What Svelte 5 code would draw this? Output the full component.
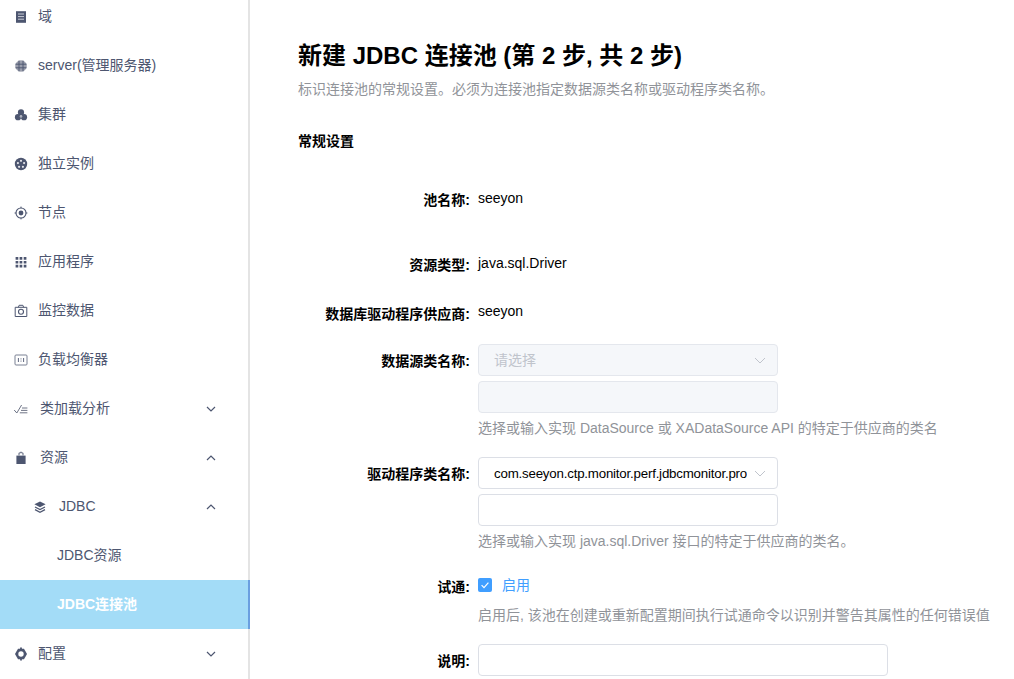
<script>
  const navItems = [
    { label: '域', icon: 'doc' },
    { label: 'server(管理服务器)', icon: 'globe' },
    { label: '集群', icon: 'cluster' },
    { label: '独立实例', icon: 'gear' },
    { label: '节点', icon: 'target' },
    { label: '应用程序', icon: 'grid' },
    { label: '监控数据', icon: 'camera' },
    { label: '负载均衡器', icon: 'balance' },
    { label: '类加载分析', icon: 'check', arrow: 'down', wide: true },
    { label: '资源', icon: 'bag', arrow: 'up', wide: true },
    { label: 'JDBC', icon: 'layers', arrow: 'up', level: 2 },
    { label: 'JDBC资源', level: 3 },
    { label: 'JDBC连接池', level: 3, active: true },
    { label: '配置', icon: 'cog', arrow: 'down' }
  ];
</script>

<div class="page">
  <aside class="sidebar">
    <ul class="menu">
      {#each navItems as item}
        <li class="item" class:active={item.active} class:sub={item.level === 2} class:leaf={item.level === 3} class:wide={item.wide}>
          {#if item.icon}
            <svg class="icon" viewBox="0 0 14 14" fill="#4d5670">
              {#if item.icon === 'doc'}
                <path d="M2 1.2h10v11.6H2z" /><path d="M4 4h6M4 6.6h6M4 9.2h6" stroke="#c9ccd6" stroke-width="1" />
              {:else if item.icon === 'globe'}
                <circle cx="7" cy="7" r="5.8" fill="#9a9eac" /><path d="M1.5 5.2h11M1.5 8.8h11M5 1.6v10.8M9 1.6v10.8" stroke="#4d5670" stroke-width=".9" />
              {:else if item.icon === 'cluster'}
                <circle cx="7" cy="4.4" r="3.1" /><circle cx="4" cy="9.2" r="3.1" /><circle cx="10" cy="9.2" r="3.1" /><circle cx="7" cy="8.4" r="1.3" fill="#aeb2bf" />
              {:else if item.icon === 'gear'}
                <circle cx="7" cy="7" r="6.2" /><circle cx="7" cy="3.8" r="1.1" fill="#e4e5ea" /><circle cx="10.1" cy="6.1" r="1.1" fill="#e4e5ea" /><circle cx="8.9" cy="9.8" r="1.1" fill="#e4e5ea" /><circle cx="5.1" cy="9.8" r="1.1" fill="#e4e5ea" /><circle cx="3.9" cy="6.1" r="1.1" fill="#e4e5ea" />
              {:else if item.icon === 'target'}
                <circle cx="7" cy="7" r="5" fill="none" stroke="#4d5670" stroke-width="1.1" /><circle cx="7" cy="7" r="2.4" /><path d="M7 .6v1.6M7 11.8v1.6M.6 7h1.6M11.8 7h1.6" stroke="#4d5670" stroke-width="1" />
              {:else if item.icon === 'grid'}
                <path d="M1.6 2h2.7v2.7H1.6zM5.6 2h2.7v2.7H5.6zM9.7 2h2.7v2.7H9.7zM1.6 5.9h2.7v2.7H1.6zM5.6 5.9h2.7v2.7H5.6zM9.7 5.9h2.7v2.7H9.7zM1.6 9.8h2.7v2.7H1.6zM5.6 9.8h2.7v2.7H5.6zM9.7 9.8h2.7v2.7H9.7z" />
              {:else if item.icon === 'camera'}
                <path d="M1.2 3.3h11.6v9.2H1.2zM4.4 3.3l.7-2h3.8l.7 2" fill="none" stroke="#4d5670" stroke-width="1" /><circle cx="7" cy="7.8" r="2.5" fill="none" stroke="#4d5670" stroke-width="1.1" />
              {:else if item.icon === 'balance'}
                <rect x="1" y="2" width="12" height="10" rx="1" fill="none" stroke="#7b8194" stroke-width="1" /><path d="M4.4 5v4M7 5.4v1M7 7.6v1M9.6 5v4" stroke="#4d5670" stroke-width=".9" />
              {:else if item.icon === 'check'}
                <path d="M.2 8l2.6 3L7.6 3M8 6h5.4M7 8.4h6.4M5.8 10.8h7.6" fill="none" stroke="#5d6478" stroke-width=".9" />
              {:else if item.icon === 'bag'}
                <path d="M2.4 4.6h9.2V13H2.4z" /><path d="M5 4.6V2.4L7 1.2l2 1.2v2.2" fill="none" stroke="#7b8194" stroke-width="1.2" />
              {:else if item.icon === 'layers'}
                <path d="M7 1.4l5.6 2.9L7 7.2 1.4 4.3z" /><path d="M2 7l5 2.6L12 7M2 9.6l5 2.6 5-2.6" fill="none" stroke="#4d5670" stroke-width="1.2" />
              {:else if item.icon === 'cog'}
                <path d="M4 1.8h6L13 7l-3 5.2H4L1 7z" /><path d="M7 .6v2M7 11.4v2" stroke="#4d5670" stroke-width="1.8" /><circle cx="7" cy="7" r="2.7" fill="#fff" />
              {/if}
            </svg>
          {/if}
          <span class="label">{item.label}</span>
          {#if item.arrow}
            <svg class="arrow" viewBox="0 0 10 6" class:up={item.arrow === 'up'}>
              <path d="M1 1l4 4 4-4" fill="none" stroke="#4d5670" stroke-width="1.2" />
            </svg>
          {/if}
        </li>
      {/each}
    </ul>
  </aside>

  <main class="content">
    <h1>新建 JDBC 连接池 (第 2 步, 共 2 步)</h1>
    <p class="intro">标识连接池的常规设置。必须为连接池指定数据源类名称或驱动程序类名称。</p>
    <h2>常规设置</h2>

    <div class="row row-name">
      <div class="key">池名称:</div>
      <div class="value">seeyon</div>
    </div>
    <div class="row row-type">
      <div class="key">资源类型:</div>
      <div class="value">java.sql.Driver</div>
    </div>
    <div class="row row-vendor">
      <div class="key">数据库驱动程序供应商:</div>
      <div class="value">seeyon</div>
    </div>

    <div class="row row-ds">
      <div class="key boxed">数据源类名称:</div>
      <div class="field">
        <div class="select disabled">
          <span class="select-text">请选择</span>
          <svg class="caret" viewBox="0 0 12 7"><path d="M1 1l5 5 5-5" fill="none" stroke="#c0c4cc" stroke-width="1" /></svg>
        </div>
        <div class="input disabled"></div>
        <div class="help">选择或输入实现 DataSource 或 XADataSource API 的特定于供应商的类名</div>
      </div>
    </div>

    <div class="row row-driver">
      <div class="key boxed">驱动程序类名称:</div>
      <div class="field">
        <div class="select">
          <span class="select-text mono-ish">com.seeyon.ctp.monitor.perf.jdbcmonitor.proxy.MonitorDriver</span>
          <svg class="caret" viewBox="0 0 12 7"><path d="M1 1l5 5 5-5" fill="none" stroke="#c0c4cc" stroke-width="1" /></svg>
        </div>
        <div class="input"></div>
        <div class="help">选择或输入实现 java.sql.Driver 接口的特定于供应商的类名。</div>
      </div>
    </div>

    <div class="row row-ping">
      <div class="key ping-key">试通:</div>
      <div class="field">
        <div class="check">
          <span class="box">
            <svg viewBox="0 0 14 14"><path d="M3.6 7.2l2.4 2.4 4.4-5" fill="none" stroke="#fff" stroke-width="1.2" /></svg>
          </span>
          <span class="check-label">启用</span>
        </div>
        <div class="help ping-help">启用后, 该池在创建或重新配置期间执行试通命令以识别并警告其属性的任何错误值</div>
      </div>
    </div>

    <div class="row row-desc">
      <div class="key boxed">说明:</div>
      <div class="input long"></div>
    </div>
  </main>
</div>

<style>
  :global(body) {
    margin: 0;
    overflow: hidden;
    background: #fff;
  }

  .page {
    display: flex;
    height: 679px;
    overflow: hidden;
    font-family: "Liberation Sans", "Noto Sans CJK SC", sans-serif;
    font-size: 14px;
  }

  .sidebar {
    width: 250px;
    flex: none;
    box-sizing: border-box;
    border-right: 2px solid #e4e4e4;
  }

  .menu {
    list-style: none;
    margin: -8px -2px 0 0;
    padding: 0;
  }

  .item {
    display: flex;
    align-items: center;
    height: 49px;
    box-sizing: border-box;
    padding-left: 14px;
    color: #4d5670;
  }

  .label {
    padding-bottom: 4px;
  }

  .item.sub {
    padding-left: 33px;
  }

  .item.sub .label {
    padding-bottom: 2px;
  }

  .item.leaf {
    padding-left: 57px;
  }

  .item.active {
    background: #a3dcf7;
    border-right: 2px solid #6a9fe0;
    color: #fff;
    font-weight: 700;
  }

  .icon {
    width: 14px;
    height: 14px;
    flex: none;
    margin-right: 10px;
  }

  .item.wide .icon {
    margin-right: 12px;
  }

  .item.sub .icon {
    margin-right: 12px;
  }

  .arrow {
    width: 10px;
    height: 6px;
    margin-left: auto;
    margin-right: 34px;
  }

  .arrow.up {
    transform: rotate(180deg);
  }

  .content {
    flex: 1;
    min-width: 0;
    padding: 0 0 0 48px;
  }

  h1 {
    margin: 42px 0 0;
    font-size: 24px;
    line-height: 28px;
    font-weight: 700;
    color: #000;
  }

  .intro {
    margin: 9px 0 0;
    font-size: 14px;
    line-height: 20px;
    color: #909399;
  }

  h2 {
    margin: 32px 0 0;
    font-size: 14px;
    line-height: 20px;
    font-weight: 700;
    color: #000;
  }

  .row {
    display: grid;
    grid-template-columns: 172px 1fr;
    column-gap: 8px;
  }

  .row-name { margin-top: 37px; }
  .row-type { margin-top: 43px; }
  .row-vendor { margin-top: 27px; }
  .row-ds { margin-top: 20px; }
  .row-driver { margin-top: 19px; }
  .row-ping { margin-top: 22px; }
  .row-desc { margin-top: 19px; }

  .row-vendor .value {
    margin-top: -1px;
  }

  .key {
    text-align: right;
    font-weight: 700;
    line-height: 20px;
    color: #000;
    padding-top: 2px;
  }

  .key.boxed {
    padding-top: 7px;
  }

  .key.ping-key {
    padding-top: 4px;
  }

  .value {
    line-height: 20px;
    color: #000;
  }

  .field {
    width: 540px;
  }

  .select, .input {
    width: 300px;
    height: 32px;
    box-sizing: border-box;
    border: 1px solid #dcdfe6;
    border-radius: 4px;
    background: #fff;
  }

  .select {
    display: flex;
    align-items: center;
    padding: 0 11px 0 15px;
    margin-bottom: 5px;
  }

  .select-text {
    flex: 1;
    min-width: 0;
    overflow: hidden;
    white-space: nowrap;
    color: #000;
    font-size: 14px;
    margin-right: 7px;
  }

  .select-text.mono-ish {
    font-size: 13.3px;
    letter-spacing: -0.2px;
  }

  .caret {
    width: 12px;
    height: 7px;
    flex: none;
  }

  .disabled {
    background: #f5f7fa;
    border-color: #e4e7ed;
  }

  .disabled .select-text {
    color: #c0c4cc;
    padding-bottom: 2px;
  }

  .input.long {
    width: 410px;
  }

  .help {
    margin-top: 5px;
    font-size: 14px;
    line-height: 20px;
    color: #909399;
    white-space: nowrap;
  }

  .check {
    display: flex;
    align-items: center;
    height: 24px;
  }

  .box {
    width: 14px;
    height: 14px;
    background: #409eff;
    border-radius: 2px;
    display: flex;
  }

  .box svg {
    width: 14px;
    height: 14px;
  }

  .check-label {
    margin-left: 10px;
    color: #409eff;
    line-height: 20px;
  }

  .ping-help {
    margin-top: 8px;
  }
</style>
